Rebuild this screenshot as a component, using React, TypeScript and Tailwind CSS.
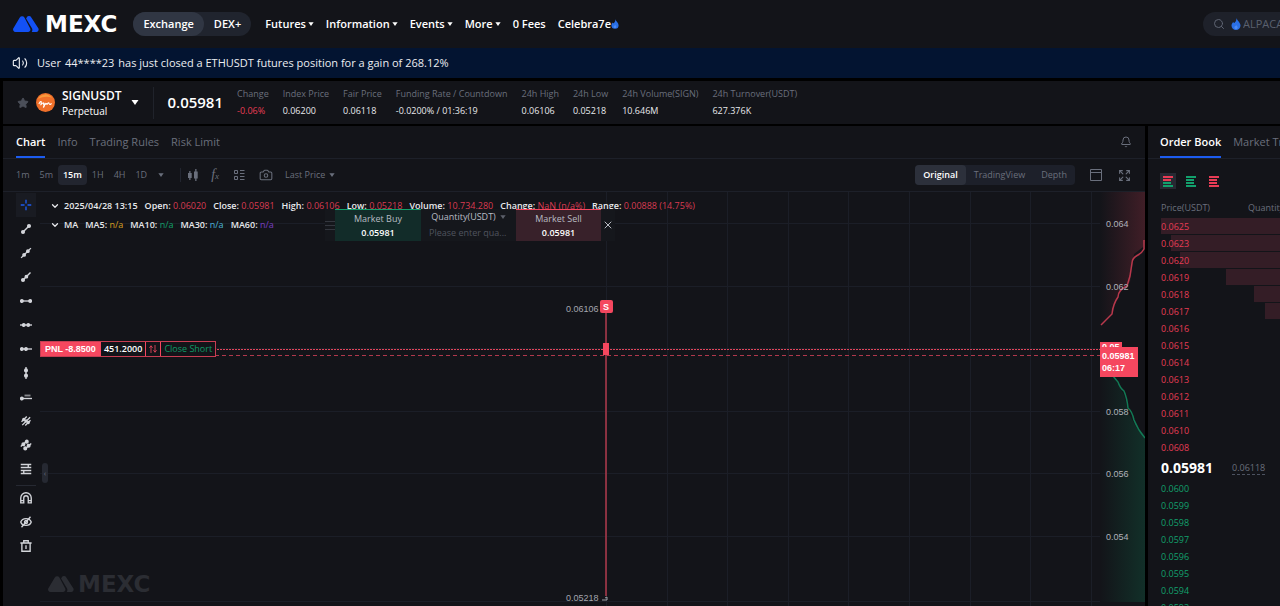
import { useState } from 'react';
import type { ReactNode } from 'react';
import { Bell, Camera, ChevronDown, Expand, Search, Star, Volume2, X } from 'lucide-react';
import clsx from 'clsx';

const NAV = [
  { label: 'Futures', menu: true },
  { label: 'Information', menu: true },
  { label: 'Events', menu: true },
  { label: 'More', menu: true },
  { label: '0 Fees', menu: false },
];

const STATS = [
  { label: 'Change', value: '-0.06%', down: true },
  { label: 'Index Price', value: '0.06200' },
  { label: 'Fair Price', value: '0.06118' },
  { label: 'Funding Rate / Countdown', value: '-0.0200% / 01:36:19' },
  { label: '24h High', value: '0.06106' },
  { label: '24h Low', value: '0.05218' },
  { label: '24h Volume(SIGN)', value: '10.646M' },
  { label: '24h Turnover(USDT)', value: '627.376K' },
];

const TABS = ['Chart', 'Info', 'Trading Rules', 'Risk Limit'];
const INTERVALS = ['1m', '5m', '15m', '1H', '4H', '1D'];
const VIEWS = ['Original', 'TradingView', 'Depth'];

const CANDLE = [
  { label: 'Open:', value: '0.06020' },
  { label: 'Close:', value: '0.05981' },
  { label: 'High:', value: '0.06106' },
  { label: 'Low:', value: '0.05218' },
  { label: 'Volume:', value: '10.734.280' },
  { label: 'Change:', value: 'NaN (n/a%)' },
  { label: 'Range:', value: '0.00888 (14.75%)' },
];

const AVERAGES = [
  { label: 'MA5:', color: 'text-[#d9a020]' },
  { label: 'MA10:', color: 'text-[#12a06c]' },
  { label: 'MA30:', color: 'text-[#4bb4dc]' },
  { label: 'MA60:', color: 'text-[#7b3fc4]' },
];

const ASKS = [
  { price: '0.0625', depth: 100 },
  { price: '0.0623', depth: 92 },
  { price: '0.0620', depth: 84 },
  { price: '0.0619', depth: 45 },
  { price: '0.0618', depth: 22 },
  { price: '0.0617', depth: 13 },
  { price: '0.0616', depth: 0 },
  { price: '0.0615', depth: 0 },
  { price: '0.0614', depth: 0 },
  { price: '0.0613', depth: 0 },
  { price: '0.0612', depth: 0 },
  { price: '0.0611', depth: 0 },
  { price: '0.0610', depth: 0 },
  { price: '0.0608', depth: 0 },
];

const BIDS = ['0.0600', '0.0599', '0.0598', '0.0597', '0.0596', '0.0595', '0.0594', '0.0593'];

const GRID_X = [566, 627, 687, 748, 808, 869, 930, 990, 1051];
const GRID_Y = [31, 94, 156, 219, 281, 344, 409];
const AXIS = [
  { price: '0.064', y: 31 },
  { price: '0.062', y: 94 },
  { price: '0.058', y: 219 },
  { price: '0.056', y: 281 },
  { price: '0.054', y: 344 },
];

const TOOLS: { name: string; icon: ReactNode }[] = [
  { name: 'Segment', icon: <><path d="M4 12 12 4" /><circle cx="4" cy="12" r="1.8" fill="currentColor" /><circle cx="12" cy="4" r="1.8" fill="currentColor" /></> },
  { name: 'Straight line', icon: <><path d="M1.500 14.500 14.500 1.500" /><circle cx="5.500" cy="10.500" r="1.600" fill="currentColor" /><circle cx="10.500" cy="5.500" r="1.600" fill="currentColor" /></> },
  { name: 'Ray', icon: <><path d="M4 12 14 2" /><circle cx="4" cy="12" r="1.800" fill="currentColor" /><circle cx="8.500" cy="7.500" r="1.600" fill="currentColor" /></> },
  { name: 'Horizontal segment', icon: <><path d="M2 8h12" /><circle cx="2.500" cy="8" r="1.700" fill="currentColor" /><circle cx="13.500" cy="8" r="1.700" fill="currentColor" /></> },
  { name: 'Horizontal line', icon: <><path d="M0 8h16" /><circle cx="5" cy="8" r="1.700" fill="currentColor" /><circle cx="11" cy="8" r="1.700" fill="currentColor" /></> },
  { name: 'Horizontal ray', icon: <><path d="M2 8h14" /><circle cx="2.500" cy="8" r="1.700" fill="currentColor" /><circle cx="8" cy="8" r="1.700" fill="currentColor" /></> },
  { name: 'Vertical line', icon: <><path d="M8 0v16" /><circle cx="8" cy="4.500" r="1.800" fill="currentColor" /><circle cx="8" cy="11.500" r="1.800" fill="currentColor" /></> },
  { name: 'Price line', icon: <><path d="M2 10h14" /><path d="M6 6h8" strokeWidth="2.500" opacity="0.6" /><circle cx="2.500" cy="10" r="1.700" fill="currentColor" /></> },
  { name: 'Parallel lines', icon: <><path d="m2 9 7-7M3 13.500 13.500 3M7 14l7-7" /><circle cx="5" cy="6" r="1.300" fill="currentColor" /><circle cx="11" cy="10" r="1.300" fill="currentColor" /><circle cx="8" cy="8" r="1.300" fill="currentColor" /></> },
  { name: 'Price channel', icon: <><path d="m1 10 9-8M6 14l9-8" /><circle cx="4.500" cy="7" r="1.800" fill="currentColor" /><circle cx="9" cy="3.500" r="1.800" fill="currentColor" /><circle cx="7" cy="12.500" r="1.800" fill="currentColor" /><circle cx="11.500" cy="9" r="1.800" fill="currentColor" /></> },
  { name: 'Fibonacci', icon: <path d="M1 2h14M1 6h14M1 10h14M1 14h14M5 10v4M11 2v4" /> },
];

const UTILITIES: { name: string; icon: ReactNode }[] = [
  { name: 'Magnet', icon: <path d="M1 14.500V8a7 7 0 0 1 14 0v6.500h-4V8a3 3 0 0 0-6 0v6.500ZM1 11.500h4M11 11.500h4" /> },
  { name: 'Hide drawings', icon: <><path d="M1 8C3 2 13 2 15 8c-2 6-12 6-14 0Z" /><circle cx="8" cy="8" r="2" /><path d="M2 15 14 1" /></> },
  { name: 'Delete drawings', icon: <path d="M.5 4h15M2.500 4v11h11V4M5 4V1h6v3M8 7v5" /> },
];

function LogoMark({ className }: { className: string }) {
  return (
    <svg viewBox="0 0 26 16" className={className} fill="currentColor" aria-hidden="true">
      <path d="M6.800 1.600a2.600 2.600 0 0 1 4.600 0l5.700 10.600a2.500 2.500 0 0 1-2.200 3.700H2.500A2.400 2.400 0 0 1 .4 12.300Z" />
      <path d="M13.700 1.500a2.600 2.600 0 0 1 4.600 0l7 10.700a2.500 2.500 0 0 1-2.100 3.700h-4.500a3.500 3.500 0 0 0 .2-3.700L13.100 2.500Z" />
    </svg>
  );
}

function Drop({ className }: { className: string }) {
  return (
    <svg viewBox="0 0 10 12" className={className} aria-hidden="true">
      <path d="M5.500 0C6 2.500 9.500 4.500 9.500 7.500a4.500 4.500 0 0 1-9 0C.5 6 1.500 4.500 2.500 4c0 .8.300 1 .8 1C4.800 4 5.500 2 5.500 0Z" fill="#2a6fe6" />
      <path d="M5.200 7c.5 1 1.500 1.500 1.500 2.500a1.700 1.700 0 0 1-3.400 0C3.300 8.500 4.700 8 5.200 7Z" fill="#4a8af5" />
    </svg>
  );
}

function Caret({ className }: { className?: string }) {
  return (
    <svg viewBox="0 0 8 5" className={clsx('shrink-0', className ?? 'h-1 w-1.5')} fill="currentColor" aria-hidden="true">
      <path d="M.5 0h7L4 5Z" />
    </svg>
  );
}

function ToolIcon({ children }: { children: ReactNode }) {
  return (
    <svg viewBox="0 0 16 16" className="size-3" fill="none" stroke="currentColor" strokeWidth="1.800" aria-hidden="true">
      {children}
    </svg>
  );
}

function BookIcon({ top, bottom }: { top: string; bottom: string }) {
  return (
    <svg viewBox="0 0 12 12" className="size-3" strokeWidth="2" aria-hidden="true">
      <path d="M1 2h10M1 5h8" stroke={top} />
      <path d="M1 8h8M1 11h10" stroke={bottom} />
    </svg>
  );
}

function Header() {
  return (
    <header className="flex h-12 shrink-0 items-center bg-[#131419] text-[11px] font-semibold text-white">
      <a href="#" aria-label="MEXC home" className="ml-[13px] flex items-center gap-1.5">
        <LogoMark className="h-4 w-[26px] text-[#1351f5]" />
        <span className="font-['DejaVu_Sans',sans-serif] text-[23px] leading-6 font-bold">MEXC</span>
      </a>
      <div className="ml-4 flex h-6 items-center rounded-full bg-[#20242e]">
        <button className="h-6 rounded-full bg-[#303643] px-2.5">Exchange</button>
        <button className="h-6 px-2.5">DEX+</button>
      </div>
      <nav className="ml-3.5 flex items-center gap-3 whitespace-nowrap">
        {NAV.map(item => (
          <a key={item.label} href="#" className="flex items-center gap-0.5">
            {item.label}
            {item.menu && <Caret />}
          </a>
        ))}
        <a href="#" className="flex items-center">
          Celebra7e
          <Drop className="h-2.5 w-2" />
        </a>
      </nav>
      <label className="ml-auto flex h-6 w-[77px] shrink-0 items-center gap-1.5 overflow-hidden rounded-l-full bg-[#1e212a] pl-2.5 text-[#5f6573]">
        <Search className="size-3 shrink-0" />
        <Drop className="h-3 w-2.5 shrink-0" />
        <input
          type="text"
          aria-label="Search"
          placeholder="ALPACA"
          className="-ml-1 w-20 shrink-0 bg-transparent text-[11px] font-normal outline-none placeholder:text-[#5a606e]"
        />
      </label>
    </header>
  );
}

function Ticker() {
  return (
    <section className="ml-[3px] flex h-[43px] shrink-0 items-center bg-[#131419] text-[9px] whitespace-nowrap">
      <button aria-label="Add to favorites" className="ml-3.5 text-[#4b4f59]">
        <Star className="size-3" fill="currentColor" />
      </button>
      <svg viewBox="0 0 20 20" className="ml-[7px] size-[19px]" aria-hidden="true">
        <circle cx="10" cy="10" r="10" fill="#f0702a" />
        <path d="M2 6a9 9 0 0 1 15-1c-5-2-10-1-15 1Z" fill="#f99a3c" />
        <path d="M3 11.500c1.500-3 3-3.500 2.500-1s-1 2.500.5 1 2-2 2 0 1.500 1 1.500-.5-.5 4-1.500 4 2-4 3-4 0 2 1 .5 1.500-1.500 2 0 1.500 0 2.500-.5" fill="none" stroke="#fff" strokeWidth="1.100" />
      </svg>
      <div className="ml-[7px] flex flex-col">
        <h1 className="text-xs leading-[17px] font-semibold text-white">SIGNUSDT</h1>
        <span className="text-[10px] leading-[15px] font-medium text-white">Perpetual</span>
      </div>
      <button aria-label="Choose contract" className="ml-2.5 text-white">
        <Caret className="h-[5px] w-2" />
      </button>
      <div className="ml-3.5 h-8 w-px bg-[#20232b]" />
      <strong className="ml-[13px] text-[15px] font-semibold text-white">0.05981</strong>
      <dl className="ml-3.5 flex gap-3.5">
        {STATS.map(stat => (
          <div key={stat.label} className="flex flex-col gap-[3px] leading-[14px]">
            <dt className="text-[#6a6f7c]">{stat.label}</dt>
            <dd className={stat.down ? 'text-[#e83c55]' : 'font-medium text-[#e8e9ec]'}>{stat.value}</dd>
          </div>
        ))}
      </dl>
    </section>
  );
}

function ChartToolbar() {
  const [interval, setInterval] = useState('15m');
  const [view, setView] = useState('Original');

  return (
    <div className="flex h-[33px] shrink-0 items-center border-b border-[#1d2029] pr-3.5 pl-2 text-[9px] text-[#6a6f7c]">
      <div className="flex items-center">
        {INTERVALS.map(item => (
          <button
            key={item}
            onClick={() => setInterval(item)}
            className={clsx('h-5 rounded-sm px-[5px]', item === interval ? 'bg-[#22252f] font-semibold text-white' : '')}
          >
            {item}
          </button>
        ))}
        <button aria-label="More intervals" className="px-1.5"><Caret /></button>
      </div>
      <div className="mr-1.5 ml-2.5 h-3.5 w-px bg-[#22252f]" />
      <div className="flex items-center gap-3">
        <button aria-label="Chart type">
          <svg viewBox="0 0 12 12" className="size-3" fill="currentColor" aria-hidden="true">
            <path d="M1 4h1.200V2h1.300v2h1.200v5H3.500v2H2.200V9H1ZM7 2.500h1.200V0h1.300v2.500h1.200v7H9.500V12H8.200V9.500H7Z" />
          </svg>
        </button>
        <button aria-label="Indicators" className="font-['Liberation_Serif',serif] text-sm leading-3 italic">
          f<span className="text-[9px]">x</span>
        </button>
        <button aria-label="Layout">
          <svg viewBox="0 0 12 12" className="ml-0.5 size-3" fill="none" stroke="currentColor" aria-hidden="true">
            <path d="M1.500 1.500h3v3h-3ZM1.500 7.500h3v3h-3ZM7 1.500h4.500M7 4.500h4.500M7 7.500h4.500M7 10.500h4.500" />
          </svg>
        </button>
        <button aria-label="Screenshot"><Camera className="ml-0.5 size-3.5" strokeWidth={1.8} /></button>
        <button className="flex items-center gap-1">Last Price <Caret /></button>
      </div>
      <div className="ml-auto flex items-center rounded-sm bg-[#1d202a]">
        {VIEWS.map(item => (
          <button
            key={item}
            onClick={() => setView(item)}
            className={clsx('h-5 rounded-sm px-2', item === view ? 'bg-[#2c303b] font-semibold text-white' : '')}
          >
            {item}
          </button>
        ))}
      </div>
      <button aria-label="Panels" className="ml-3.5">
        <svg viewBox="0 0 14 14" className="size-3.5" fill="none" stroke="currentColor" aria-hidden="true">
          <path d="M1.500 1.500h11v11h-11ZM1.500 4.500h11" />
        </svg>
      </button>
      <button aria-label="Fullscreen" className="ml-[15px]"><Expand className="size-[13px]" /></button>
    </div>
  );
}

function DrawingTools() {
  return (
    <div className="flex w-[37px] shrink-0 flex-col items-center pt-px pl-2 text-[#d3d5da]">
      <button aria-label="Crosshair" className="flex h-6 w-5 items-center justify-center bg-[#191b22] text-[#1c5cf0]">
        <ToolIcon><path d="M8 1v5M8 10v5M1 8h5M10 8h5" /></ToolIcon>
      </button>
      {TOOLS.map(tool => (
        <button key={tool.name} aria-label={tool.name} className="flex h-6 w-5 items-center justify-center">
          <ToolIcon>{tool.icon}</ToolIcon>
        </button>
      ))}
      <div className="mt-1 h-px w-5 bg-[#262932]" />
      {UTILITIES.map(tool => (
        <button key={tool.name} aria-label={tool.name} className="flex h-6 w-5 items-center justify-center">
          <ToolIcon>{tool.icon}</ToolIcon>
        </button>
      ))}
    </div>
  );
}

function PriceAxis() {
  return (
    <svg className="absolute top-0 right-0 h-full w-[105px]" aria-hidden="true">
      <defs>
        <linearGradient id="ask" x1="0" x2="1">
          <stop offset="0" stopColor="#f5475f" stopOpacity="0" />
          <stop offset="1" stopColor="#f5475f" stopOpacity="0.2" />
        </linearGradient>
        <linearGradient id="bid" x1="0" x2="1">
          <stop offset="0" stopColor="#0d9f67" stopOpacity="0" />
          <stop offset="1" stopColor="#0d9f67" stopOpacity="0.2" />
        </linearGradient>
      </defs>
      <path d="M60 0H105V48L103 55L94 62L90 90L78 103L72 123L60 132Z" fill="url(#ask)" />
      <path d="M104 48V57Q102 61 98 63Q92 66 92 71L90 84L87 94Q78 98 78 105Q73 112 72 122L61 133" fill="none" stroke="#b8384c" strokeWidth="1.500" />
      <path d="M60 184H73L84 203L88 220L96 235L105 246V410H60Z" fill="url(#bid)" />
      <path d="M73 184L78 190Q80 196 84 199Q87 206 88 216Q92 219 94 228Q98 238 105 246" fill="none" stroke="#127a55" strokeWidth="1.500" />
      <g fill="#b0b3ba" fontFamily="Liberation Sans, sans-serif" fontSize="9">
        {AXIS.map(tick => (
          <text key={tick.price} x="66" y={tick.y + 4}>{tick.price}</text>
        ))}
      </g>
    </svg>
  );
}

function TradePanel() {
  return (
    <form className="absolute top-[17px] left-[285px] flex h-8 items-stretch bg-[#15171c] text-center text-[9px] text-[#b9bcc4]">
      <span className="flex w-2.5 flex-col justify-center gap-[3px]" aria-hidden="true">
        <i className="h-px bg-[#34373f]" />
        <i className="h-px bg-[#34373f]" />
        <i className="h-px bg-[#34373f]" />
      </span>
      <button type="button" className="w-[86px] border-t border-[#12a06c] bg-[#122c29] leading-[14px]">
        Market Buy
        <b className="block font-semibold text-white">0.05981</b>
      </button>
      <div className="flex w-[95px] flex-col px-2">
        <button type="button" className="flex h-[15px] items-center justify-center gap-1 whitespace-nowrap">
          Quantity(USDT) <Caret className="h-1 w-1.5 text-[#5d616b]" />
        </button>
        <input
          type="text"
          aria-label="Quantity"
          placeholder="Please enter qua..."
          className="h-4 w-full bg-transparent outline-none placeholder:text-[#50545f]"
        />
      </div>
      <button type="button" className="w-[85px] border-t border-[#f5475f] bg-[#38212a] leading-[14px]">
        Market Sell
        <b className="block font-semibold text-white">0.05981</b>
      </button>
      <button type="button" aria-label="Close panel" className="px-px">
        <X className="size-3" />
      </button>
    </form>
  );
}

function Chart() {
  return (
    <div className="relative min-w-0 flex-1 overflow-hidden">
      <svg className="absolute inset-0 h-full w-full" aria-hidden="true">
        <g stroke="#1b1e27">
          {GRID_X.map(x => (
            <line key={x} x1={x + 0.5} x2={x + 0.5} y1="0" y2="100%" />
          ))}
          {GRID_Y.map(y => (
            <line key={y} x1="0" x2="1060" y1={y + 0.5} y2={y + 0.5} />
          ))}
        </g>
        <line x1="0" x2="1060" y1="157.500" y2="157.500" stroke="#e0455b" strokeDasharray="2 1" />
        <line x1="0" x2="1060" y1="163.500" y2="163.500" stroke="#b0384c" strokeDasharray="4 3" />
        <path d="M566 119V404" stroke="#b23a4c" strokeWidth="1.500" />
        <rect x="563" y="151" width="6" height="12" fill="#f5475f" />
        <path d="M562 408h5v-3l-2 1" fill="none" stroke="#9ea1a9" />
        <g fill="#a3a6ae" fontFamily="Liberation Sans, sans-serif" fontSize="9">
          <text x="526" y="120">0.06106</text>
          <text x="526" y="409">0.05218</text>
        </g>
        <rect x="560" y="108" width="13" height="13" rx="2" fill="#f5475f" />
        <text x="566" y="118" fill="#fff" textAnchor="middle" fontFamily="Liberation Sans, sans-serif" fontSize="9" fontWeight="700">S</text>
      </svg>
      <PriceAxis />

      <div className="relative flex flex-col items-start pt-[5px] pl-2.5 text-[9px] leading-[18px] font-semibold whitespace-nowrap text-[#e8e9ec]">
        <div className="flex gap-[7px]">
          <button aria-label="Collapse candle data" className="w-[7px]"><ChevronDown className="size-2.5" strokeWidth={3} /></button>
          <span>2025/04/28 13:15</span>
          {CANDLE.map(item => (
            <span key={item.label}>{item.label} <span className="font-normal text-[#d93b52]">{item.value}</span></span>
          ))}
        </div>
        <div className="mt-px flex gap-[7px]">
          <button aria-label="Collapse averages" className="w-[7px]"><ChevronDown className="size-2.5" strokeWidth={3} /></button>
          <span>MA</span>
          {AVERAGES.map(item => (
            <span key={item.label}>{item.label} <span className={clsx('font-medium', item.color)}>n/a</span></span>
          ))}
        </div>
      </div>

      <TradePanel />

      <div className="absolute top-[149px] left-0 flex h-4 items-stretch divide-x divide-[#f5475f] border border-[#c63d52] bg-[#131419] text-[9px] leading-[14px] whitespace-nowrap">
        <span className="bg-[#f5475f] px-1 font-['Liberation_Sans',sans-serif] font-bold text-white">PNL -8.8500</span>
        <span className="px-[3px] font-semibold text-white">451.2000</span>
        <button aria-label="Reverse position" className="px-[3px] text-[#f5475f]">
          <svg viewBox="0 0 10 10" className="h-2.5 w-2" fill="none" stroke="currentColor" aria-hidden="true">
            <path d="M2.500 10V1M.5 3.500l2-2.500 2 2.500M7.500 0v9M5.500 6.500l2 2.500 2-2.500" />
          </svg>
        </button>
        <button className="px-[3px] text-[#0f9a66]">Close Short</button>
      </div>

      <div className="absolute top-[150px] right-[7px] w-[38px]">
        <div className="h-[5px] w-[22px] overflow-hidden bg-[#f5475f] px-0.5 font-['Liberation_Sans',sans-serif] text-[9px] leading-[10px] font-bold text-white">0.05</div>
        <div className="bg-[#f5475f] px-0.5 py-[3px] font-['Liberation_Sans',sans-serif] text-[9px] leading-3 font-bold text-white">
          <p>0.05981</p>
          <p>06:17</p>
        </div>
      </div>

      <button aria-label="Hide drawing tools" className="absolute top-[271px] left-0.5 h-5 w-1.5 rounded-sm bg-[#262932] text-[8px] leading-5 text-[#6a6f7c]">‹</button>

      <div className="absolute bottom-2.5 left-2 flex items-center gap-1 text-[#2b2d33]">
        <LogoMark className="h-4 w-[26px]" />
        <span className="font-['DejaVu_Sans',sans-serif] text-[23px] leading-6 font-bold">MEXC</span>
      </div>
    </div>
  );
}

function OrderBook() {
  return (
    <aside className="flex w-[132px] shrink-0 flex-col overflow-hidden bg-[#131419] whitespace-nowrap">
      <div className="flex h-[33px] shrink-0 gap-3 border-b border-[#1d2029] pl-3 text-[11px]">
        <button className="border-b-2 border-[#1c5cf0] pt-0.5 font-semibold text-white">Order Book</button>
        <button className="text-[#6a6f7c]">Market Trades</button>
      </div>
      <div className="mt-3.5 flex items-center gap-[7px] pl-3">
        <button aria-label="Asks and bids" className="flex size-4 items-center justify-center bg-[#262932]"><BookIcon top="#e83c55" bottom="#12a06c" /></button>
        <button aria-label="Bids only" className="flex size-4 items-center justify-center"><BookIcon top="#12a06c" bottom="#12a06c" /></button>
        <button aria-label="Asks only" className="flex size-4 items-center justify-center"><BookIcon top="#e83c55" bottom="#e83c55" /></button>
      </div>
      <table className="mt-2 ml-[13px] w-[119px] shrink-0 table-fixed text-left text-[9px] text-[#6a6f7c]">
        <thead>
          <tr className="h-[21px]">
            <th scope="col" className="w-[87px] p-0 font-normal">Price(USDT)</th>
            <th scope="col" className="p-0 font-normal">Quantity</th>
          </tr>
        </thead>
        <tbody>
          {ASKS.map(row => (
            <tr key={row.price} className="h-[17px] text-[#e83c55]">
              <td colSpan={2} className="relative p-0 leading-4">
                <span className="absolute top-0 right-0 h-4 bg-[#341d26]" style={{ width: `${row.depth}%` }} />
                <span className="relative">{row.price}</span>
              </td>
            </tr>
          ))}
          <tr className="h-6">
            <td className="p-0 text-sm leading-5 font-bold text-white">0.05981</td>
            <td className="p-0"><span className="-ml-4 border-b border-dashed border-[#4c5260]">0.06118</span></td>
          </tr>
          {BIDS.map(price => (
            <tr key={price} className="h-[17px] text-[#12a06c]">
              <td colSpan={2} className="p-0 leading-4">{price}</td>
            </tr>
          ))}
        </tbody>
      </table>
    </aside>
  );
}

export default function App() {
  const [tab, setTab] = useState('Chart');

  return (
    <div className="flex h-screen flex-col overflow-hidden bg-black font-['Open_Sans',sans-serif]">
      <Header />
      <div className="flex h-[30px] shrink-0 items-center gap-1 bg-[#031431] pl-3 text-[11px] text-[#eceef2]">
        <Volume2 className="mr-[5px] size-4" strokeWidth={1.7} />
        <span>User</span>
        <span>44****23</span>
        <span>has just closed a ETHUSDT futures position for a gain of 268.12%</span>
      </div>
      <div className="mt-[3px] flex min-h-0 flex-1 flex-col gap-[2px]">
        <Ticker />
        <main className="flex min-h-0 flex-1 gap-[3px] pl-[3px]">
          <section className="flex min-w-0 flex-1 flex-col bg-[#131419]">
            <div className="flex h-[33px] shrink-0 items-stretch gap-3 border-b border-[#1d2029] px-[13px] text-[11px]">
              {TABS.map(item => (
                <button
                  key={item}
                  onClick={() => setTab(item)}
                  className={clsx('border-b-2 pt-0.5', item === tab ? 'border-[#1c5cf0] font-semibold text-white' : 'border-transparent text-[#6a6f7c]')}
                >
                  {item}
                </button>
              ))}
              <button aria-label="Price alerts" className="ml-auto text-[#6a6f7c]"><Bell className="size-3" /></button>
            </div>
            <ChartToolbar />
            <div className="flex min-h-0 flex-1">
              <DrawingTools />
              <Chart />
            </div>
          </section>
          <OrderBook />
        </main>
      </div>
    </div>
  );
}
